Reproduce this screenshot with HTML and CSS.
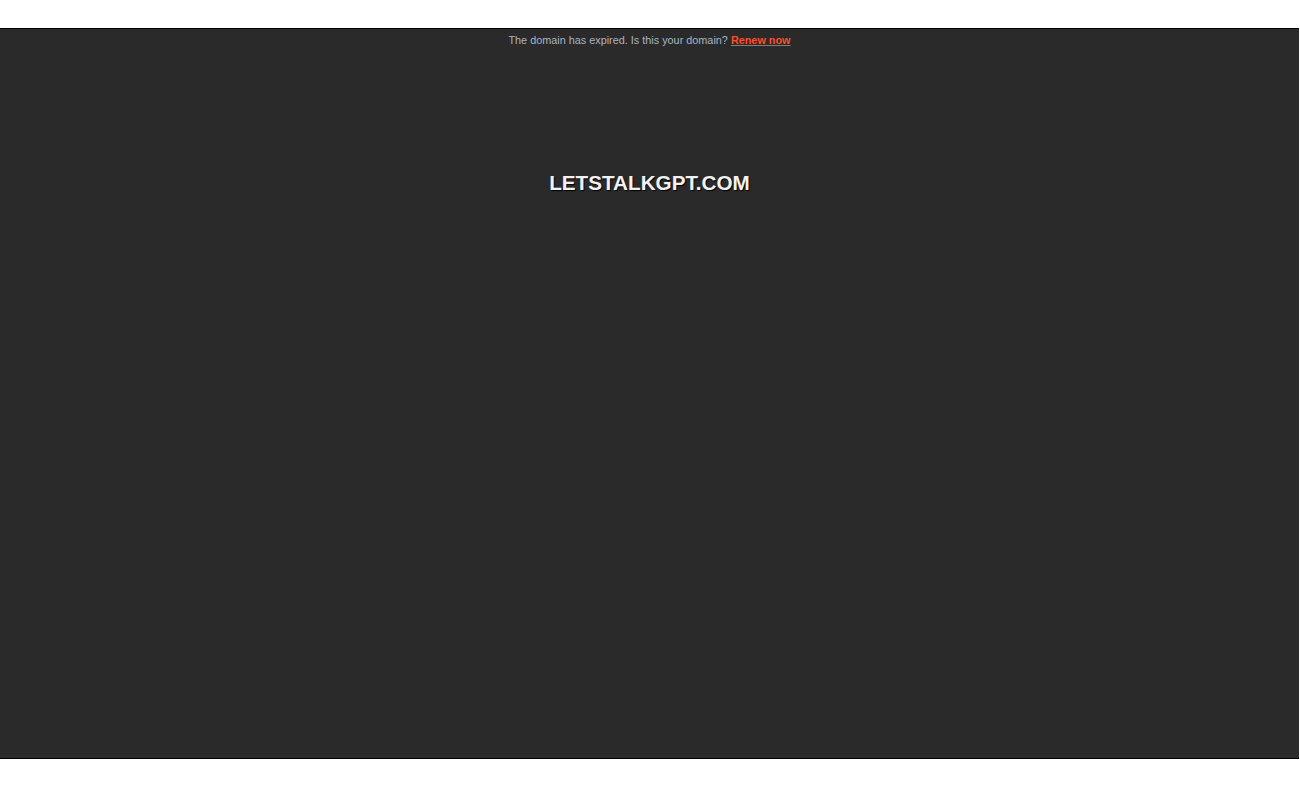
FILE: index.html
```html
<!DOCTYPE html>
<html>
<head>
<meta charset="utf-8">
<link rel="stylesheet" href="styles.css">
</head>
<body>
<div class="page">
  <div class="notice">The domain has expired. Is this your domain? <a href="#" class="renew">Renew now</a></div>
  <h1 class="domain">LETSTALKGPT.COM</h1>
</div>
</body>
</html>
```
FILE: styles.css
```css
html, body {
  margin: 0;
  padding: 0;
  background: #fff;
}
body {
  padding-top: 28px;
  font-family: "Liberation Sans", Arial, sans-serif;
}
.page {
  width: 1299px;
  height: 729px;
  background: #2a2a2a;
  border-top: 1px solid #000;
  border-bottom: 1px solid #000;
  text-align: center;
}
.notice {
  padding-top: 4px;
  font-size: 10.85px;
  line-height: 14px;
  color: #a9b4c2;
}
.renew {
  color: #ff4e2a;
  font-weight: bold;
  text-decoration: underline;
}
.domain {
  margin: 123px 0 0;
  font-size: 20.7px;
  line-height: 26px;
  font-weight: bold;
  color: #f2f2f2;
  text-shadow: 1px 1px 1px #000;
}
```
